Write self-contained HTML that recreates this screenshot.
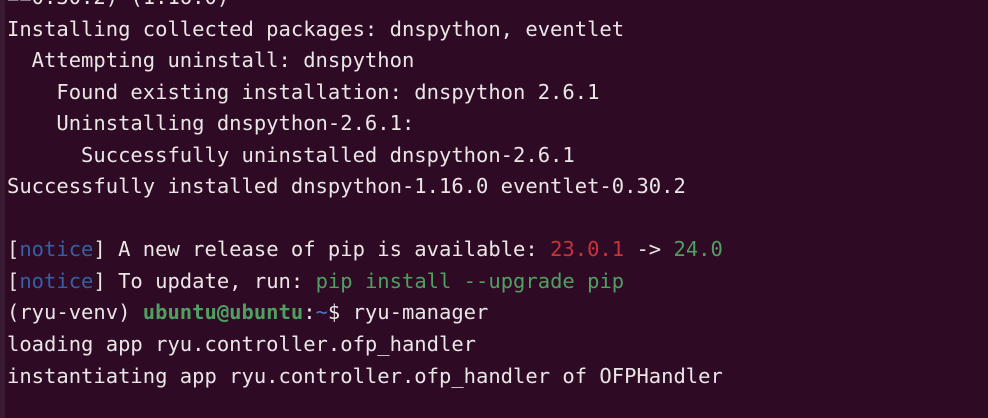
<!DOCTYPE html>
<html><head><meta charset="utf-8"><style>
html,body{margin:0;padding:0}
body{width:988px;height:418px;overflow:hidden;background:#2f0a25;position:relative}
.edge{position:absolute;left:0;top:0;width:5px;height:418px;background:#3a1a32}
pre{position:absolute;left:7px;top:-18px;margin:0;font-family:"DejaVu Sans Mono","Liberation Mono",monospace;font-size:20.5px;line-height:31.55px;color:#e9e6e6;white-space:pre}
.b{color:#3560a3}.r{color:#c7343a}.g{color:#4fa060}.gb{color:#4fa060;font-weight:bold}.t{color:#4a77c0}
</style></head><body><div class="edge"></div><pre>==0.30.2) (1.16.0)
Installing collected packages: dnspython, eventlet
  Attempting uninstall: dnspython
    Found existing installation: dnspython 2.6.1
    Uninstalling dnspython-2.6.1:
      Successfully uninstalled dnspython-2.6.1
Successfully installed dnspython-1.16.0 eventlet-0.30.2

[<span class="b">notice</span>] A new release of pip is available: <span class="r">23.0.1</span> -&gt; <span class="g">24.0</span>
[<span class="b">notice</span>] To update, run: <span class="g">pip install --upgrade pip</span>
(ryu-venv) <span class="gb">ubuntu@ubuntu</span>:<span class="t">~</span>$ ryu-manager
loading app ryu.controller.ofp_handler
instantiating app ryu.controller.ofp_handler of OFPHandler</pre></body></html>
